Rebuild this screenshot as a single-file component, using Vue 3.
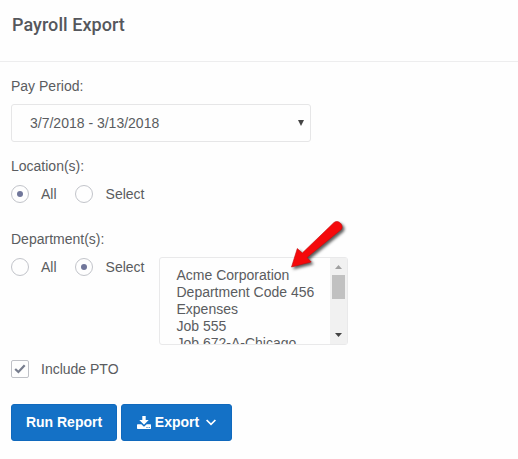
<template>
  <div class="page">
    <header class="header">
      <h1>Payroll Export</h1>
    </header>

    <main class="form">
      <div class="label">Pay Period:</div>
      <div class="select">
        <span>{{ period }}</span>
        <svg class="caret" width="6" height="6" viewBox="0 0 6 6">
          <path d="M0 0h6L3 6z" fill="#444" />
        </svg>
      </div>

      <div class="label label-location">Location(s):</div>
      <div class="options">
        <label v-for="opt in choices" :key="opt" class="option" @click="location = opt">
          <span :class="['radio', { checked: location === opt }]"></span>
          <span>{{ opt }}</span>
        </label>
      </div>

      <div class="label label-department">Department(s):</div>
      <div class="departments">
        <div class="options">
          <label v-for="opt in choices" :key="opt" class="option" @click="department = opt">
            <span :class="['radio', { checked: department === opt }]"></span>
            <span>{{ opt }}</span>
          </label>
        </div>
        <div class="listbox">
          <ul class="items">
            <li v-for="item in departments" :key="item">{{ item }}</li>
          </ul>
          <div class="scrollbar">
            <svg width="7" height="4" viewBox="0 0 7 4"><path d="M0 4L3.5 0L7 4z" fill="#a0a0a0" /></svg>
            <div class="thumb"></div>
            <svg width="7" height="4" viewBox="0 0 7 4"><path d="M0 0L3.5 4L7 0z" fill="#444" /></svg>
          </div>
          <svg class="arrow" width="64" height="58" viewBox="0 0 64 58">
            <path d="M9.500 50L15.300 31.500L20.300 36L52 5.500C56 2 62.500 8 59.300 12.500L25 40.500L29.200 45z" />
          </svg>
        </div>
      </div>

      <label class="pto" @click="includePto = !includePto">
        <span class="checkbox">
          <svg v-if="includePto" width="12" height="10" viewBox="0 0 12 10">
            <path d="M1.200 5L4.400 8L10.700 1.200" fill="none" stroke="#777d8e" stroke-width="2.200" />
          </svg>
        </span>
        <span>Include PTO</span>
      </label>

      <div class="buttons">
        <button class="btn btn-run">Run Report</button>
        <button class="btn btn-export">
          <svg width="14" height="13" viewBox="0 0 14 13" fill="#fff">
            <path d="M5.300 0h3.400v4h3L7 8.800L2.300 4h3z" />
            <path fill-rule="evenodd" d="M.7 8.200h3.600L7 10.800l2.700-2.600h3.600q.7 0 .7.700v3.400q0 .7-.7.700H.7q-.7 0-.7-.7V8.900q0-.7.7-.7zM9.500 11v1h1v-1zM11.700 11v1h1v-1z" />
          </svg>
          <span>Export</span>
          <svg class="chevron" width="10" height="7" viewBox="0 0 10 7">
            <path d="M.6 1L5 5.400L9.400 1" fill="none" stroke="#fff" stroke-width="1.700" />
          </svg>
        </button>
      </div>
    </main>
  </div>
</template>

<script setup>
import { ref } from 'vue'

const period = ref('3/7/2018 - 3/13/2018')
const choices = ['All', 'Select']
const location = ref('All')
const department = ref('Select')
const includePto = ref(true)

const departments = [
  'Acme Corporation',
  'Department Code 456',
  'Expenses',
  'Job 555',
  'Job 672-A-Chicago'
]
</script>

<style scoped>
.page {
  height: 459px;
  overflow: hidden;
  background: #fefefe;
  color: #5a5c60;
  font-family: 'Liberation Sans', Arial, sans-serif;
  font-size: 14px;
  line-height: 18px;
}

.header {
  box-sizing: border-box;
  height: 62px;
  padding: 14px 12px 0;
  border-bottom: 1px solid #ededee;
}

h1 {
  margin: 0;
  font-family: Roboto, sans-serif;
  font-size: 18px;
  font-weight: 500;
  line-height: 22px;
  letter-spacing: 0.05px;
  color: #55575c;
}

.form {
  padding: 15px 11px 0;
}

.label {
  height: 18px;
}

.select {
  box-sizing: border-box;
  display: flex;
  align-items: center;
  justify-content: space-between;
  width: 300px;
  height: 38px;
  margin-top: 9px;
  padding: 0 6px 0 18px;
  border: 1px solid #e6e6e7;
  border-radius: 3px;
}

.label-location {
  margin-top: 15px;
}

.label-department {
  margin-top: 27px;
}

.options {
  display: flex;
  gap: 18px;
  height: 18px;
  margin-top: 10px;
}

.option {
  display: flex;
  gap: 12px;
}

.option + .option {
  gap: 13px;
}

.radio {
  box-sizing: border-box;
  display: flex;
  align-items: center;
  justify-content: center;
  width: 18px;
  height: 18px;
  border: 1px solid #c2c4ca;
  border-radius: 50%;
}

.radio.checked::after {
  content: '';
  width: 6px;
  height: 6px;
  border-radius: 50%;
  background: #70769a;
}

.departments {
  display: flex;
  align-items: flex-start;
  gap: 15px;
  margin-top: 9px;
}

.departments .options {
  margin-top: 1px;
}

.listbox {
  box-sizing: border-box;
  position: relative;
  display: flex;
  width: 189px;
  height: 88px;
  border: 1px solid #e9e9ea;
  border-radius: 3px;
}

.items {
  flex: 1;
  margin: 0;
  padding: 9px 0 0 16px;
  overflow: hidden;
  list-style: none;
  line-height: 17px;
  white-space: nowrap;
}

.scrollbar {
  box-sizing: border-box;
  display: flex;
  flex-direction: column;
  align-items: center;
  width: 17px;
  padding: 7px 0;
  background: #f1f1f1;
}

.thumb {
  width: 13px;
  height: 24px;
  margin: 6px 0 auto;
  background: #c1c1c1;
}

.arrow {
  position: absolute;
  left: 122px;
  top: -41px;
  fill: #f5090b;
  stroke: #c50b0d;
  stroke-width: 0.6;
  filter: drop-shadow(2px 2px 1.5px rgba(0, 0, 0, 0.65));
}

.pto {
  display: flex;
  gap: 12px;
  margin-top: 15px;
}

.checkbox {
  box-sizing: border-box;
  display: flex;
  align-items: center;
  justify-content: center;
  width: 18px;
  height: 18px;
  border: 1px solid #bfc1c7;
  border-radius: 2px;
}

.buttons {
  display: flex;
  gap: 4px;
  margin-top: 26px;
}

.btn {
  display: flex;
  align-items: center;
  justify-content: center;
  height: 37px;
  padding: 0 0 1px;
  border: 1px solid #1069bd;
  border-radius: 3px;
  background: #1471c6;
  color: #fff;
  font: bold 14px 'Liberation Sans', Arial, sans-serif;
}

.btn-run {
  width: 106px;
}

.btn-export {
  width: 111px;
  gap: 4px;
}

.chevron {
  margin-left: 3px;
}
</style>
